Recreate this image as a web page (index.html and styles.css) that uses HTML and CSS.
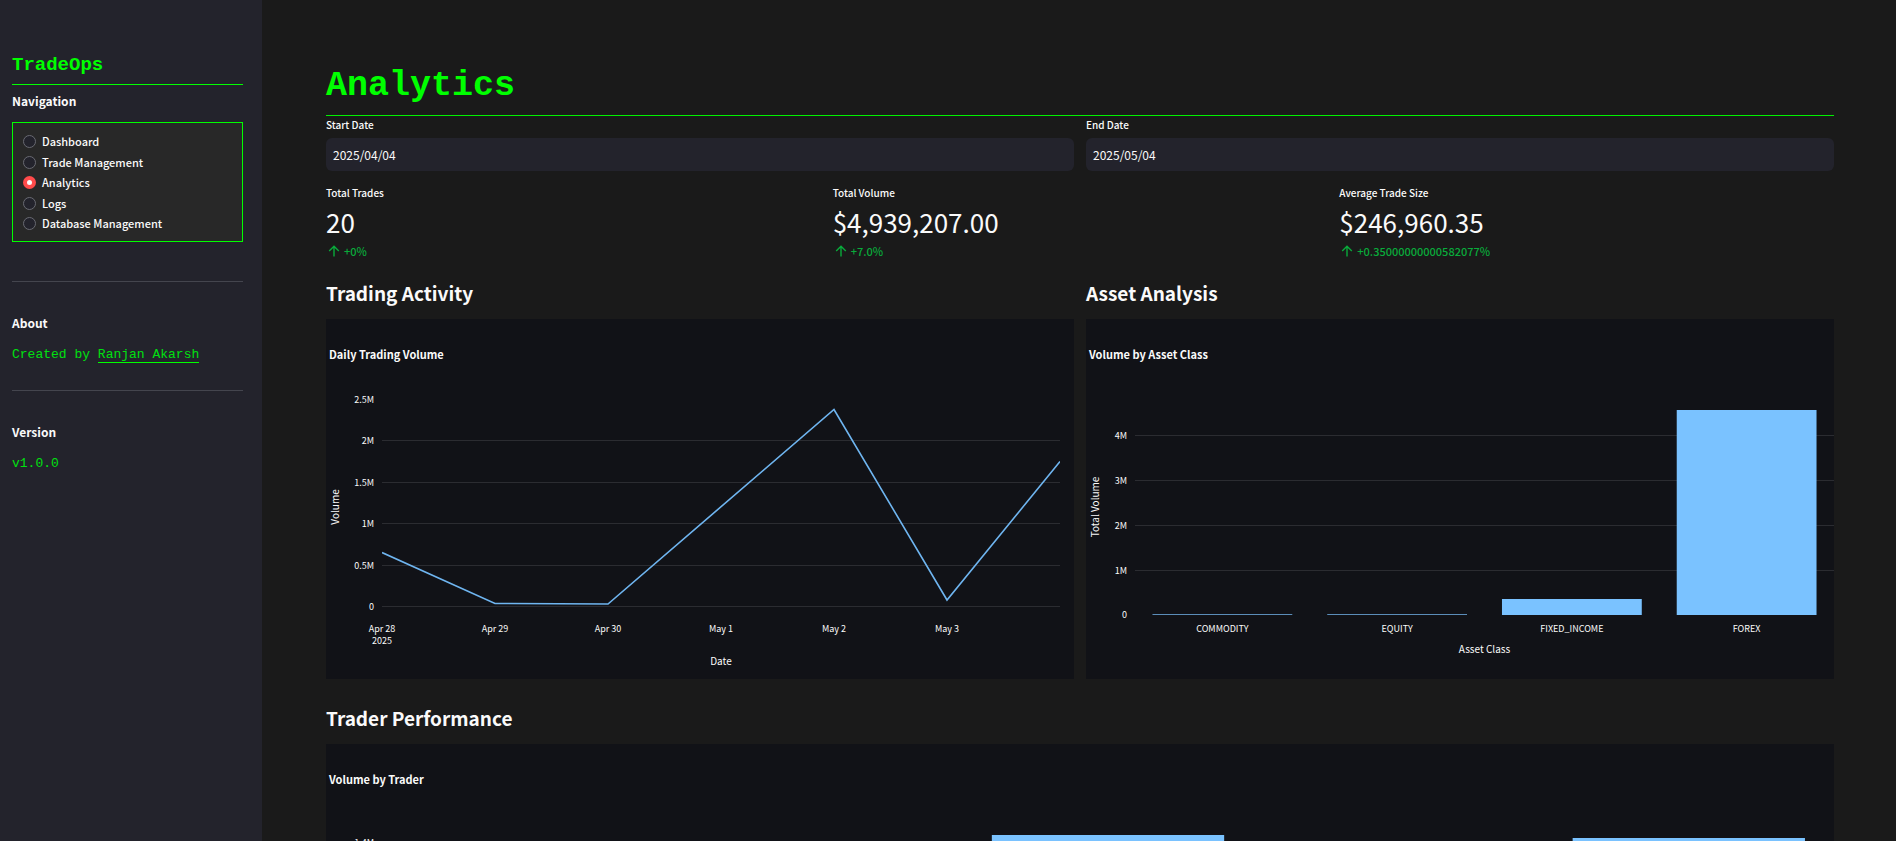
FILE: index.html
```html
<!DOCTYPE html>
<html lang="en">
<head>
<meta charset="utf-8">
<meta name="viewport" content="width=device-width, initial-scale=1">
<title>TradeOps – Analytics</title>
<link rel="stylesheet" href="styles.css">
</head>
<body>
<div class="app">
  <aside class="sidebar">
    <h2 class="brand">TradeOps</h2>
    <nav class="nav">
      <h3 class="side-heading" id="nav-title">Navigation</h3>
      <div class="nav-box" role="radiogroup" aria-labelledby="nav-title">
        <label class="nav-item"><input class="nav-radio" type="radio" name="page"><span>Dashboard</span></label>
        <label class="nav-item"><input class="nav-radio" type="radio" name="page"><span>Trade Management</span></label>
        <label class="nav-item"><input class="nav-radio" type="radio" name="page" checked><span>Analytics</span></label>
        <label class="nav-item"><input class="nav-radio" type="radio" name="page"><span>Logs</span></label>
        <label class="nav-item"><input class="nav-radio" type="radio" name="page"><span>Database Management</span></label>
      </div>
    </nav>
    <section class="side-section">
      <h3 class="side-heading">About</h3>
      <p class="side-text">Created by <a class="side-link" href="#">Ranjan Akarsh</a></p>
    </section>
    <section class="side-section">
      <h3 class="side-heading">Version</h3>
      <p class="side-text">v1.0.0</p>
    </section>
  </aside>

  <main class="main">
    <h1 class="title">Analytics</h1>

    <div class="two-col dates">
      <div class="field">
        <label class="label" for="start">Start Date</label>
        <input class="date" id="start" type="text" value="2025/04/04">
      </div>
      <div class="field">
        <label class="label" for="end">End Date</label>
        <input class="date" id="end" type="text" value="2025/05/04">
      </div>
    </div>

    <div class="metrics">
      <div class="metric">
        <div class="label">Total Trades</div>
        <div class="value">20</div>
        <div class="delta"><svg class="arrow" viewBox="0 0 12 12" aria-hidden="true"><path d="M6 11.5V1.5M1.2 6L6 1.2L10.8 6"/></svg>+0%</div>
      </div>
      <div class="metric">
        <div class="label">Total Volume</div>
        <div class="value">$4,939,207.00</div>
        <div class="delta"><svg class="arrow" viewBox="0 0 12 12" aria-hidden="true"><path d="M6 11.5V1.5M1.2 6L6 1.2L10.8 6"/></svg>+7.0%</div>
      </div>
      <div class="metric">
        <div class="label">Average Trade Size</div>
        <div class="value">$246,960.35</div>
        <div class="delta"><svg class="arrow" viewBox="0 0 12 12" aria-hidden="true"><path d="M6 11.5V1.5M1.2 6L6 1.2L10.8 6"/></svg>+0.35000000000582077%</div>
      </div>
    </div>

    <div class="two-col">
      <section class="panel">
        <h2 class="heading">Trading Activity</h2>
        <svg class="chart" role="img" aria-label="Daily Trading Volume">
          <text class="chart-title" x="3" y="40">Daily Trading Volume</text>
          <text class="axis-title" transform="translate(13 188) rotate(-90)">Volume</text>
          <g class="ticks-y">
            <text x="48" y="84">2.5M</text>
            <text x="48" y="125">2M</text>
            <text x="48" y="167">1.5M</text>
            <text x="48" y="208">1M</text>
            <text x="48" y="250">0.5M</text>
            <text x="48" y="291">0</text>
          </g>
          <svg class="plot plot-line" x="56">
            <g class="grid">
              <rect y="121" width="100%" height="1"/>
              <rect y="163" width="100%" height="1"/>
              <rect y="204" width="100%" height="1"/>
              <rect y="246" width="100%" height="1"/>
              <rect y="287" width="100%" height="1"/>
            </g>
            <svg width="100%" height="360" viewBox="0 0 6 360" preserveAspectRatio="none">
              <polyline class="series" points="0,233.5 1,284.5 2,285 4,90.5 5,281 6,142.5"/>
            </svg>
            <g class="ticks-x">
              <text x="0" y="313">Apr 28</text>
              <text x="0" y="325">2025</text>
              <text x="16.667%" y="313">Apr 29</text>
              <text x="33.333%" y="313">Apr 30</text>
              <text x="50%" y="313">May 1</text>
              <text x="66.667%" y="313">May 2</text>
              <text x="83.333%" y="313">May 3</text>
            </g>
            <text class="axis-title" x="50%" y="346">Date</text>
          </svg>
        </svg>
      </section>

      <section class="panel">
        <h2 class="heading">Asset Analysis</h2>
        <svg class="chart" role="img" aria-label="Volume by Asset Class">
          <text class="chart-title" x="3" y="40">Volume by Asset Class</text>
          <text class="axis-title" transform="translate(13 188) rotate(-90)">Total Volume</text>
          <g class="ticks-y">
            <text x="41" y="120">4M</text>
            <text x="41" y="165">3M</text>
            <text x="41" y="210">2M</text>
            <text x="41" y="255">1M</text>
            <text x="41" y="299">0</text>
          </g>
          <svg class="plot plot-asset" x="49">
            <g class="grid">
              <rect y="116" width="100%" height="1"/>
              <rect y="161" width="100%" height="1"/>
              <rect y="206" width="100%" height="1"/>
              <rect y="251" width="100%" height="1"/>
            </g>
            <g class="bars">
              <rect class="thin" x="2.5%" y="295" width="20%" height="1"/>
              <rect class="thin" x="27.5%" y="295" width="20%" height="1"/>
              <rect x="52.5%" y="280" width="20%" height="16"/>
              <rect x="77.5%" y="91" width="20%" height="205"/>
            </g>
            <g class="ticks-x">
              <text x="12.5%" y="313">COMMODITY</text>
              <text x="37.5%" y="313">EQUITY</text>
              <text x="62.5%" y="313">FIXED_INCOME</text>
              <text x="87.5%" y="313">FOREX</text>
            </g>
            <text class="axis-title" x="50%" y="334">Asset Class</text>
          </svg>
        </svg>
      </section>
    </div>

    <section class="panel panel-wide">
      <h2 class="heading">Trader Performance</h2>
      <svg class="chart" role="img" aria-label="Volume by Trader">
        <text class="chart-title" x="3" y="40">Volume by Trader</text>
        <g class="ticks-y">
          <text x="48" y="102">1.4M</text>
        </g>
        <svg class="plot plot-trader" x="56">
          <g class="bars">
            <rect x="42%" y="91" width="16%" height="205"/>
            <rect x="82%" y="94" width="16%" height="202"/>
          </g>
        </svg>
      </svg>
    </section>
  </main>
</div>
</body>
</html>
```
FILE: styles.css
```css
:root {
  --green: #00ff00;
  --text: #fafafa;
  --bg: #1a1a1a;
  --side: #23232c;
  --chart: #111217;
  --blue: #7ac2ff;
  --sans: "Noto Sans CJK SC", "Noto Sans", sans-serif;
  --mono: "Courier New", "Liberation Mono", monospace;
}

* {
  box-sizing: border-box;
}

body {
  margin: 0;
  background: var(--bg);
  color: var(--text);
  font: 500 11px/20px var(--sans);
}

h1, h2, h3, p {
  margin: 0;
}

.app {
  display: flex;
  height: 100vh;
}

/* Sidebar */
.sidebar {
  flex: 0 0 262px;
  padding: 53px 19px 0 12px;
  background: var(--side);
}

.brand {
  padding-bottom: 7px;
  border-bottom: 1px solid var(--green);
  color: var(--green);
  font: 700 19px/24px var(--mono);
}

.side-heading {
  font-size: 12px;
  font-weight: 700;
  line-height: 20px;
}

.nav {
  padding: 6px 0 39px;
}

.nav-box {
  display: flex;
  flex-direction: column;
  margin-top: 11px;
  padding: 8px 10px;
  border: 1px solid var(--green);
  background: #282828;
}

.nav-item {
  display: flex;
  align-items: center;
  gap: 6px;
  height: 20px;
  margin-bottom: 1px;
}

.nav-item:nth-child(even),
.nav-item:last-child {
  margin-bottom: 0;
}

.nav-radio {
  appearance: none;
  width: 13px;
  height: 13px;
  margin: 0;
  border: 1px solid #696a72;
  border-radius: 50%;
  background: var(--side);
}

.nav-radio:checked {
  border: 4px solid #ff4b4b;
  background: var(--text);
}

.side-section {
  padding: 31px 0 26px;
  border-top: 1px solid #44454e;
}

.side-text {
  margin-top: 13px;
  color: #00e010;
  font: 400 13px/18px var(--mono);
}

.side-link {
  color: inherit;
  border-bottom: 1px solid var(--green);
  text-decoration: none;
}

/* Main column */
.main {
  flex: 1;
  min-width: 0;
  padding: 64px 62px 64px 64px;
  overflow-y: auto;
  scrollbar-width: none;
}

.title {
  padding-bottom: 6px;
  border-bottom: 1px solid #00f000;
  color: var(--green);
  font: 700 35px/45px var(--mono);
}

.two-col {
  display: grid;
  grid-template-columns: 1fr 1fr;
  gap: 12px;
}

.label {
  display: block;
  font-size: 10px;
  line-height: 18px;
}

.date {
  display: block;
  width: 100%;
  height: 33px;
  margin-top: 4px;
  padding: 0 7px;
  border: 0;
  border-radius: 6px;
  background: var(--side);
  color: var(--text);
  font: 400 12px/20px var(--sans);
}

.metrics {
  display: grid;
  grid-template-columns: 1fr 1fr 1fr;
  gap: 12px;
  margin-top: 13px;
}

.value {
  font-size: 26px;
  font-weight: 400;
  line-height: 39px;
}

.delta {
  display: flex;
  align-items: center;
  gap: 4px;
  margin-top: 1px;
  padding-left: 2px;
  color: #09ab3b;
  font-size: 11px;
  line-height: 18px;
}

.arrow {
  width: 12px;
  height: 12px;
  fill: none;
  stroke: currentColor;
  stroke-width: 1.4;
}

.heading {
  padding: 17px 0 10px;
  font-size: 19px;
  font-weight: 700;
  line-height: 32px;
}

.panel-wide {
  padding-top: 6px;
}

/* Charts */
.chart {
  display: block;
  width: 100%;
  height: 360px;
  background: var(--chart);
  fill: var(--text);
}

.plot {
  height: 360px;
  overflow: visible;
}

.plot-line {
  width: calc(100% - 70px);
}

.plot-asset {
  width: calc(100% - 49px);
}

.plot-trader {
  width: calc(100% - 56px);
}

.chart-title {
  font-size: 11px;
  font-weight: 700;
}

.axis-title {
  font-size: 10px;
  font-weight: 400;
  text-anchor: middle;
}

.ticks-x,
.ticks-y {
  font-size: 9px;
  font-weight: 400;
}

.ticks-x {
  text-anchor: middle;
}

.ticks-y {
  text-anchor: end;
}

.grid {
  fill: #2b2c31;
}

.bars {
  fill: var(--blue);
}

.thin {
  opacity: .7;
}

.series {
  fill: none;
  stroke: #6fb5f0;
  stroke-width: 1.6;
  vector-effect: non-scaling-stroke;
}
```
